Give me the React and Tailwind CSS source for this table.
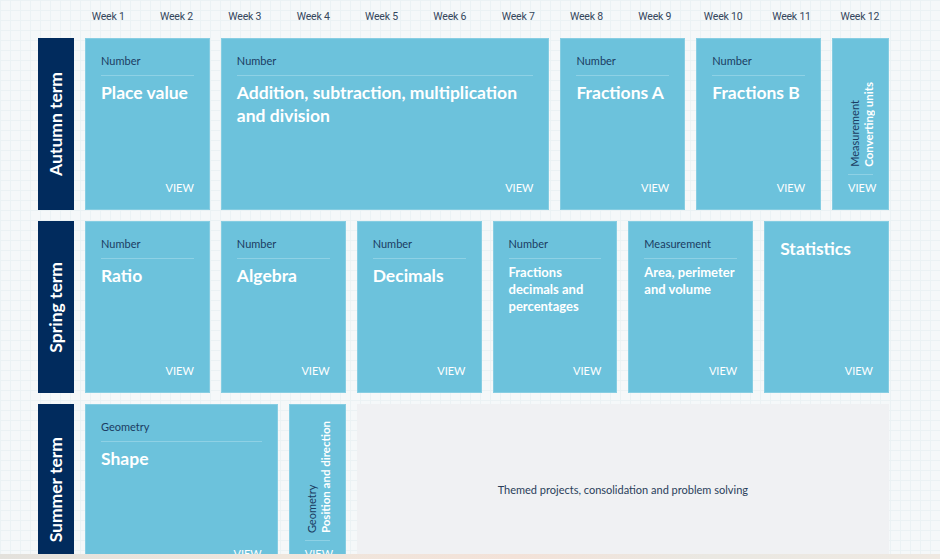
import React from "react";

const LATO = "font-['Lato','Open_Sans',sans-serif]";

function Term({ name }) {
  return (
    <div className="bg-[#012b5d] flex items-center justify-center">
      <span className={`${LATO} [writing-mode:vertical-rl] rotate-180 text-white font-bold text-[17.5px] leading-[20px] whitespace-nowrap`}>
        {name}
      </span>
    </div>
  );
}

function View() {
  return (
    <div className={`${LATO} text-right text-white text-[11px] leading-[16px]`}>VIEW</div>
  );
}

function Card({ span, label, lines, small }) {
  return (
    <div className={`${span} bg-[#6cc2dc] border border-[#86cde2] flex flex-col px-[15px] pt-[15px] pb-[13px] min-w-0`}>
      {label && (
        <div className={`${LATO} text-[11px] leading-[14px] text-[#1b3c62] pb-[7px] border-b border-[#8ed1e5] whitespace-nowrap`}>
          {label}
        </div>
      )}
      <div
        className={`${LATO} ${label ? "mt-[5px]" : ""} text-white font-bold whitespace-nowrap ${
          small ? "text-[13px] leading-[17px]" : "text-[17.5px] leading-[23px]"
        }`}
      >
        {lines.map((l, i) => (
          <div key={i}>{l}</div>
        ))}
      </div>
      <div className="mt-auto">
        <View />
      </div>
    </div>
  );
}

function NarrowCard({ label, title }) {
  return (
    <div className="col-span-1 bg-[#6cc2dc] border border-[#86cde2] flex flex-col px-[15px] pt-[15px] pb-[13px] min-w-0">
      <div className="flex-1 flex items-end">
        <div className={`${LATO} [writing-mode:vertical-rl] rotate-180 whitespace-nowrap`}>
          <div className="text-[11px] leading-[13px] text-[#1b3c62]">{label}</div>
          <div className="text-[11.5px] leading-[16px] font-bold text-white">{title}</div>
        </div>
      </div>
      <div className="mt-[7px] border-t border-[#8ed1e5] pt-[5px]">
        <View />
      </div>
    </div>
  );
}

const weeks = ["Week 1", "Week 2", "Week 3", "Week 4", "Week 5", "Week 6", "Week 7", "Week 8", "Week 9", "Week 10", "Week 11", "Week 12"];

export default function App() {
  return (
    <div className="h-screen w-full overflow-hidden relative bg-[#f5f8f9] bg-[linear-gradient(to_right,#ebf2f4_1px,transparent_1px),linear-gradient(to_bottom,#ebf2f4_1px,transparent_1px)] bg-[size:10px_10px]">
      <div className="ml-[74px] w-[820px] grid grid-cols-12 pt-[10px] mb-[14px]">
        {weeks.map((w) => (
          <div key={w} className="text-center font-['Roboto',sans-serif] text-[10.5px] leading-[14px] tracking-[-0.2px] text-[#34465c]">
            {w}
          </div>
        ))}
      </div>
      <div className="ml-[38px] w-[851px] grid grid-cols-[36px_repeat(12,minmax(0,1fr))] auto-rows-[172px] gap-[11px]">
        <Term name="Autumn term" />
        <Card span="col-span-2" label="Number" lines={["Place value"]} />
        <Card span="col-span-5" label="Number" lines={["Addition, subtraction, multiplication", "and division"]} />
        <Card span="col-span-2" label="Number" lines={["Fractions A"]} />
        <Card span="col-span-2" label="Number" lines={["Fractions B"]} />
        <NarrowCard label="Measurement" title="Converting units" />

        <Term name="Spring term" />
        <Card span="col-span-2" label="Number" lines={["Ratio"]} />
        <Card span="col-span-2" label="Number" lines={["Algebra"]} />
        <Card span="col-span-2" label="Number" lines={["Decimals"]} />
        <Card span="col-span-2" label="Number" lines={["Fractions", "decimals and", "percentages"]} small />
        <Card span="col-span-2" label="Measurement" lines={["Area, perimeter", "and volume"]} small />
        <Card span="col-span-2" lines={["Statistics"]} />

        <Term name="Summer term" />
        <Card span="col-span-3" label="Geometry" lines={["Shape"]} />
        <NarrowCard label="Geometry" title="Position and direction" />
        <div className={`col-span-8 bg-[#f0f1f3] flex items-center justify-center ${LATO} text-[11px] text-[#2a3e5a]`}>
          Themed projects, consolidation and problem solving
        </div>
      </div>
      <div className="fixed left-0 right-0 bottom-0 h-[5px] bg-[linear-gradient(to_right,#e3e1dc,#efe6dd_30%,#f3e2d8_55%,#eae8e2_75%,#efe9e2)]" />
    </div>
  );
}
